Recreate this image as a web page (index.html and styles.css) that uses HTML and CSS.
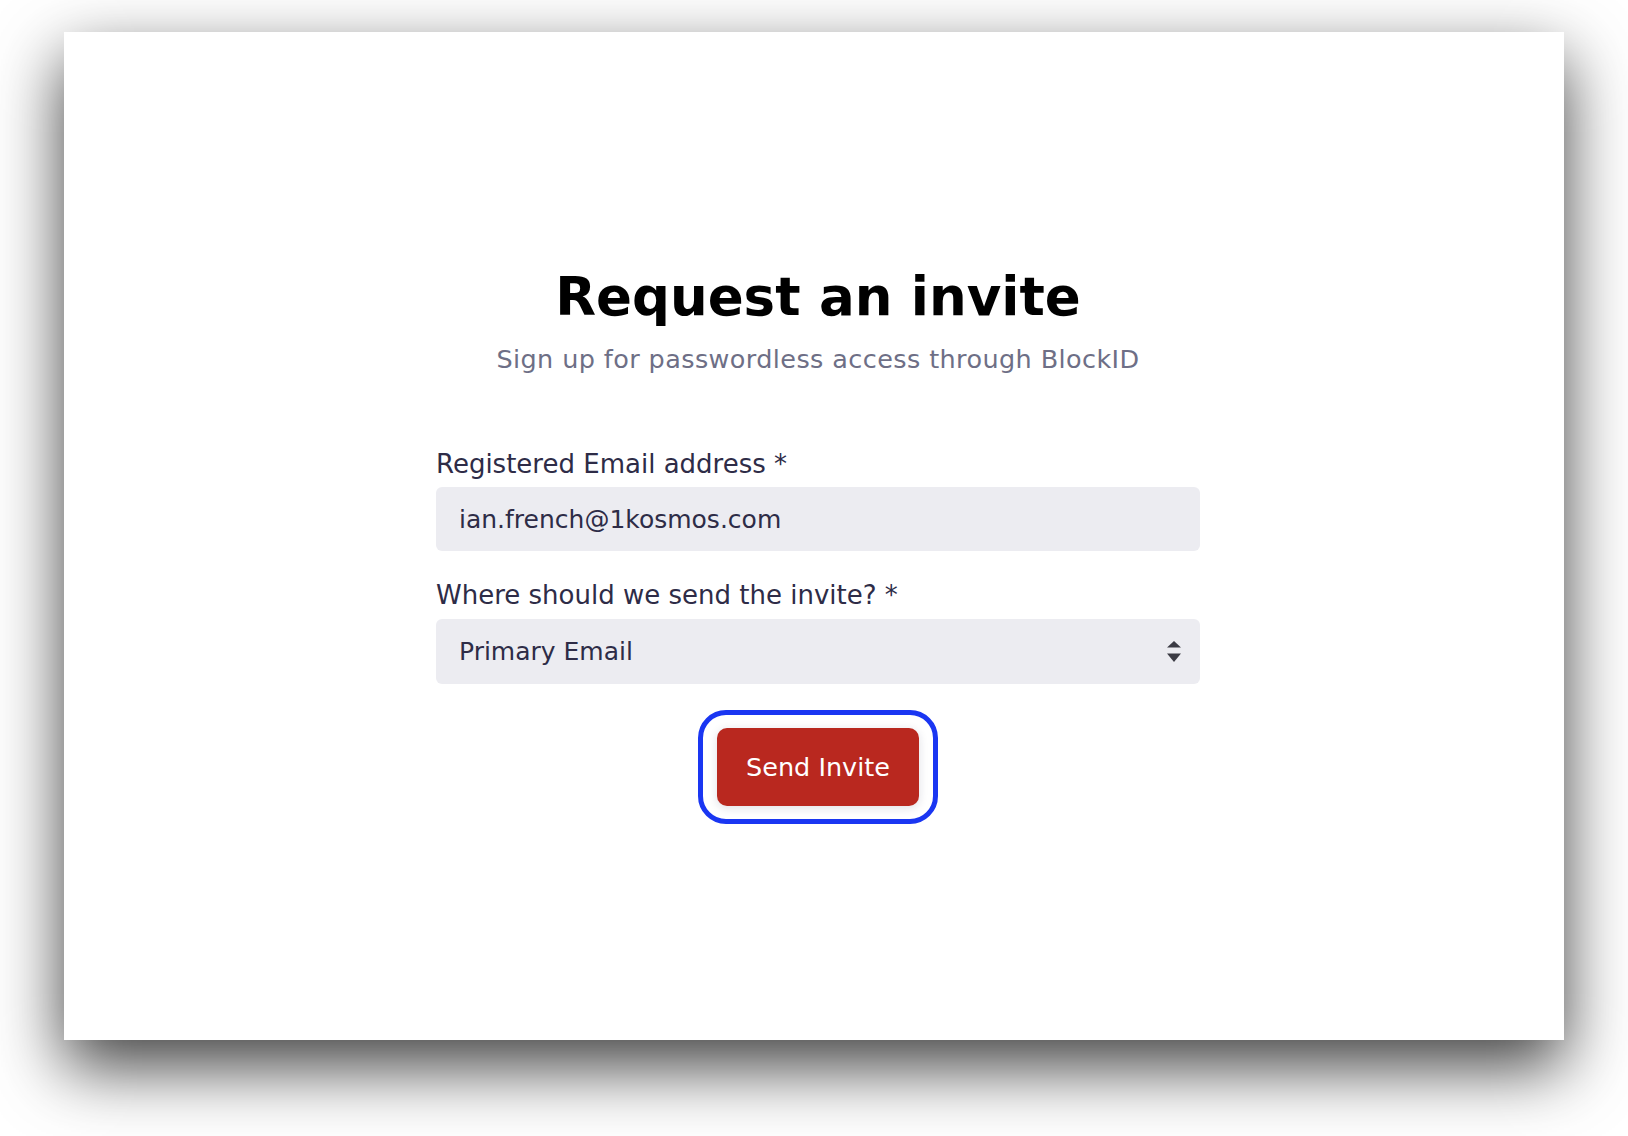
FILE: index.html
```html
<!DOCTYPE html>
<html lang="en">
<head>
<meta charset="utf-8">
<title>Request an invite</title>
<link rel="stylesheet" href="styles.css">
</head>
<body>
<main class="card">
  <h1 class="title">Request an invite</h1>
  <p class="subtitle">Sign up for passwordless access through BlockID</p>
  <form class="form">
    <label class="label" for="email">Registered Email address *</label>
    <input class="field" id="email" type="text" value="ian.french@1kosmos.com">
    <label class="label label-second">Where should we send the invite? *</label>
    <div class="field select" role="combobox" aria-expanded="false">
      <span>Primary Email</span>
      <svg class="arrows" width="14" height="21" viewBox="0 0 14 21" aria-hidden="true">
        <path d="M0 6.5 L7 0 L14 6.5 Z" fill="#3b3b44"/>
        <path d="M0 12.5 L14 12.5 L7 21 Z" fill="#3b3b44"/>
      </svg>
    </div>
    <div class="actions">
      <div class="focus-ring">
        <button type="button" class="btn">Send Invite</button>
      </div>
    </div>
  </form>
</main>
</body>
</html>
```
FILE: styles.css
```css
* { box-sizing: border-box; }

html, body {
  margin: 0;
  padding: 0;
  background: #ffffff;
}

body {
  font-family: "DejaVu Sans", Inter, sans-serif;
  overflow: hidden;
  height: 1136px;
}

.card {
  margin: 32px 64px 0;
  width: 1500px;
  height: 1008px;
  background: #ffffff;
  box-shadow: 0 27px 64px 0 rgba(0, 0, 0, 0.75);
  display: flex;
  flex-direction: column;
  align-items: center;
  padding: 233px 0 0 8px;
}

.title {
  margin: 0;
  font-size: 53px;
  line-height: 64px;
  font-weight: 700;
  color: #000000;
}

.subtitle {
  margin: 14px 0 0;
  font-size: 25.5px;
  line-height: 32px;
  font-weight: 400;
  letter-spacing: 0.4px;
  color: #6e6f86;
}

.form {
  margin-top: 73px;
  width: 764px;
  display: flex;
  flex-direction: column;
}

.label {
  font-size: 26px;
  line-height: 32px;
  color: #2e2c47;
  margin-bottom: 7px;
}

.label-second {
  margin-top: 28px;
  margin-bottom: 8px;
}

.field {
  width: 100%;
  height: 64px;
  border: none;
  border-radius: 6px;
  background: #ececf1;
  padding: 0 19px 0 23px;
  font-family: "DejaVu Sans", Inter, sans-serif;
  font-size: 25px;
  color: #2e2c47;
  outline: none;
}

.select {
  height: 65px;
  display: flex;
  align-items: center;
  justify-content: space-between;
}

.arrows {
  display: block;
}

.actions {
  display: flex;
  justify-content: center;
  margin-top: 26px;
}

.focus-ring {
  width: 240px;
  height: 114px;
  border: 5px solid #1a36f2;
  border-radius: 28px;
  display: flex;
  align-items: center;
  justify-content: center;
  background: #ffffff;
}

.btn {
  width: 202px;
  height: 78px;
  border: none;
  border-radius: 10px;
  background: #b9281f;
  color: #ffffff;
  font-family: "DejaVu Sans", Inter, sans-serif;
  font-size: 25.5px;
  font-weight: 400;
  box-shadow: 0 2px 10px rgba(30, 30, 70, 0.14);
  cursor: pointer;
}
```
